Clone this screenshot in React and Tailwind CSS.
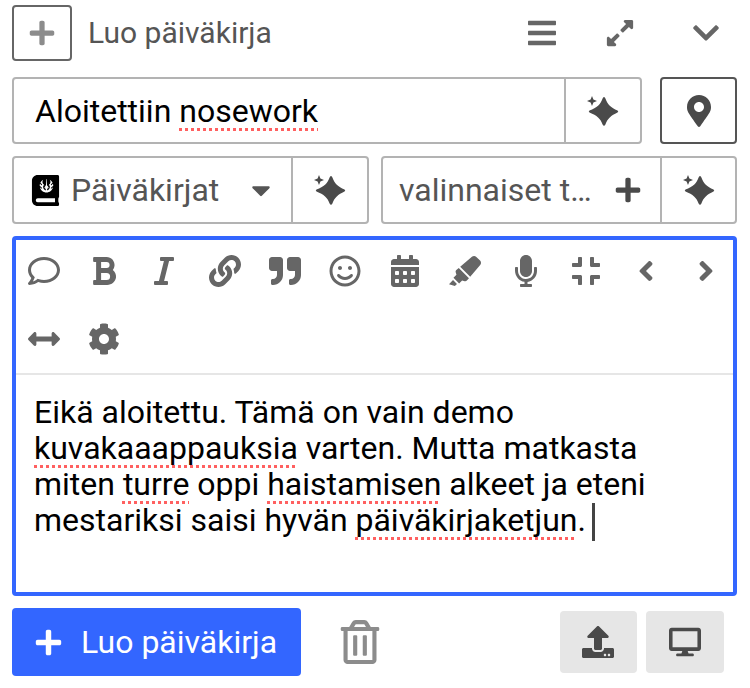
import React from 'react';
import {
  FaBars, FaExpandAlt, FaChevronDown, FaMapMarkerAlt, FaPlus, FaCaretDown, FaJournalWhills,
  FaRegComment, FaBold, FaItalic, FaLink, FaQuoteRight, FaRegSmile, FaCalendarAlt, FaHighlighter,
  FaMicrophone, FaCompress, FaAngleLeft, FaAngleRight, FaArrowsAltH, FaCog, FaRegTrashAlt,
  FaUpload, FaDesktop,
} from 'react-icons/fa';

const Sparkle = () => (
  <svg viewBox="0 0 34 32" className="w-[34px] h-[32px] text-[#4a4a4a]" fill="currentColor">
    <path d="M18 2 Q19 2 19.4 3.5 C21.5 9.5 25 12.5 31.5 15.6 Q33 16.5 31.5 17.4 C25 20.5 21.5 23.5 19.4 29.5 Q18 32 16.6 29.5 C14.5 23.5 11 20.5 3.5 17.4 Q2 16.5 3.5 15.6 C11 12.5 14.5 9.5 16.6 3.5 Q17 2 18 2 Z" />
    <path d="M6 1 L7.4 4.6 L11 6 L7.4 7.4 L6 11 L4.6 7.4 L1 6 L4.6 4.6 Z" />
  </svg>
);

const Misspelled = ({ children }) => (
  <span className="underline decoration-dotted decoration-[#ff6060] decoration-[3px] underline-offset-[6px] [text-decoration-skip-ink:none]">
    {children}
  </span>
);

const toolbarTop = [
  FaRegComment, FaBold, FaItalic, FaLink, FaQuoteRight, FaRegSmile,
  FaCalendarAlt, FaHighlighter, FaMicrophone, FaCompress, FaAngleLeft, FaAngleRight,
];

const App = () => {
  return (
    <div className="w-[750px] h-[688px] bg-white overflow-hidden font-['Roboto',sans-serif] pl-3 pr-[13px] pt-[5px]">
      {/* Header */}
      <div className="flex items-center h-[56px]">
        <div className="w-[60px] h-[56px] border-2 border-[#666] rounded-[4px] flex items-center justify-center">
          <FaPlus className="text-[#8c8c8c]" size={28} />
        </div>
        <span className="ml-[16px] text-[30px] text-[#555] -translate-y-[1px]">Luo päiväkirja</span>
        <div className="ml-auto flex items-center text-[#666]">
          <FaBars size={32} className="mr-[47px]" />
          <FaExpandAlt size={30} className="mr-[56px]" />
          <FaChevronDown size={30} className="mr-[16px]" />
        </div>
      </div>

      {/* Title */}
      <div className="flex mt-[16px] h-[67px] gap-[18px]">
        <div className="flex-1 flex border-2 border-[#b3b3b3] rounded-[4px]">
          <div className="flex-1 flex items-center pl-[21px] text-[32px] text-black">
            Aloitettiin&nbsp;<Misspelled>nosework</Misspelled>
          </div>
          <div className="w-[76px] border-l-2 border-[#b3b3b3] flex items-center justify-center">
            <Sparkle />
          </div>
        </div>
        <div className="w-[77px] border-2 border-[#555] rounded-[4px] flex items-center justify-center">
          <FaMapMarkerAlt size={32} className="text-[#4a4a4a]" />
        </div>
      </div>

      {/* Selects */}
      <div className="flex mt-[12px] h-[68px] gap-[12px]">
        <div className="w-[357px] flex border-2 border-[#b3b3b3] rounded-[4px]">
          <div className="flex-1 flex items-center pl-[16px] text-[32px] text-[#555]">
            <FaJournalWhills size={31} className="text-black mr-[10px]" />
            Päiväkirjat
            <FaCaretDown size={30} className="ml-auto mr-[15px] text-[#555]" />
          </div>
          <div className="w-[76px] border-l-2 border-[#b3b3b3] flex items-center justify-center">
            <Sparkle />
          </div>
        </div>
        <div className="flex-1 flex border-2 border-[#b3b3b3] rounded-[4px]">
          <div className="flex-1 flex items-center pl-[16px] text-[32px] text-[#555]">
            valinnaiset t…
            <FaPlus size={28} className="ml-auto mr-[18px] text-[#4a4a4a]" />
          </div>
          <div className="w-[75px] border-l-2 border-[#b3b3b3] flex items-center justify-center">
            <Sparkle />
          </div>
        </div>
      </div>

      {/* Editor */}
      <div className="mt-[12px] h-[360px] border-[4px] border-[#3366ff] rounded-[4px]">
        <div className="h-[135px] border-b-2 border-[#e6e6e6] pl-[12px] pt-[13px] text-[#666]">
          <div className="flex gap-[28.2px]">
            {toolbarTop.map((Icon, i) => (
              <div key={i} className="w-[32px] h-[36px] flex items-center justify-center">
                <Icon size={32} />
              </div>
            ))}
          </div>
          <div className="flex gap-[28px] mt-[32px]">
            <div className="w-[32px] h-[36px] flex items-center justify-center"><FaArrowsAltH size={32} /></div>
            <div className="w-[32px] h-[36px] flex items-center justify-center"><FaCog size={32} /></div>
          </div>
        </div>
        <div className="pl-[18px] pr-[10px] pt-[19px] text-[32px] leading-[36px] text-black">
          <p>Eikä aloitettu. Tämä on vain demo</p>
          <p><Misspelled>kuvakaaappauksia</Misspelled> varten. Mutta matkasta</p>
          <p>miten <Misspelled>turre</Misspelled> oppi <Misspelled>haistamisen</Misspelled> alkeet ja eteni</p>
          <p className="flex items-center">
            <span>mestariksi saisi hyvän <Misspelled>päiväkirjaketjun</Misspelled>.</span>
            <span className="ml-[6px] w-[3px] h-[38px] -my-[1px] translate-y-[2px] bg-[#444]" />
          </p>
        </div>
      </div>

      {/* Footer */}
      <div className="flex items-center mt-[12px]">
        <div className="w-[289px] h-[68px] bg-[#3366ff] rounded-[4px] flex items-center pl-[22px] text-white text-[32px]">
          <FaPlus size={29} className="mr-[18px]" />
          Luo päiväkirja
        </div>
        <FaRegTrashAlt size={44} className="ml-[37px] text-[#8c8c8c]" />
        <div className="ml-auto flex gap-[9px] mr-[13px]">
          <div className="w-[77px] h-[62px] bg-[#e6e6e6] rounded-[4px] flex items-center justify-center">
            <FaUpload size={32} className="text-[#4a4a4a] -translate-x-[1px]" />
          </div>
          <div className="w-[78px] h-[62px] bg-[#e6e6e6] rounded-[4px] flex items-center justify-center">
            <FaDesktop size={32} className="text-[#4a4a4a]" />
          </div>
        </div>
      </div>
    </div>
  );
};

export default App;
